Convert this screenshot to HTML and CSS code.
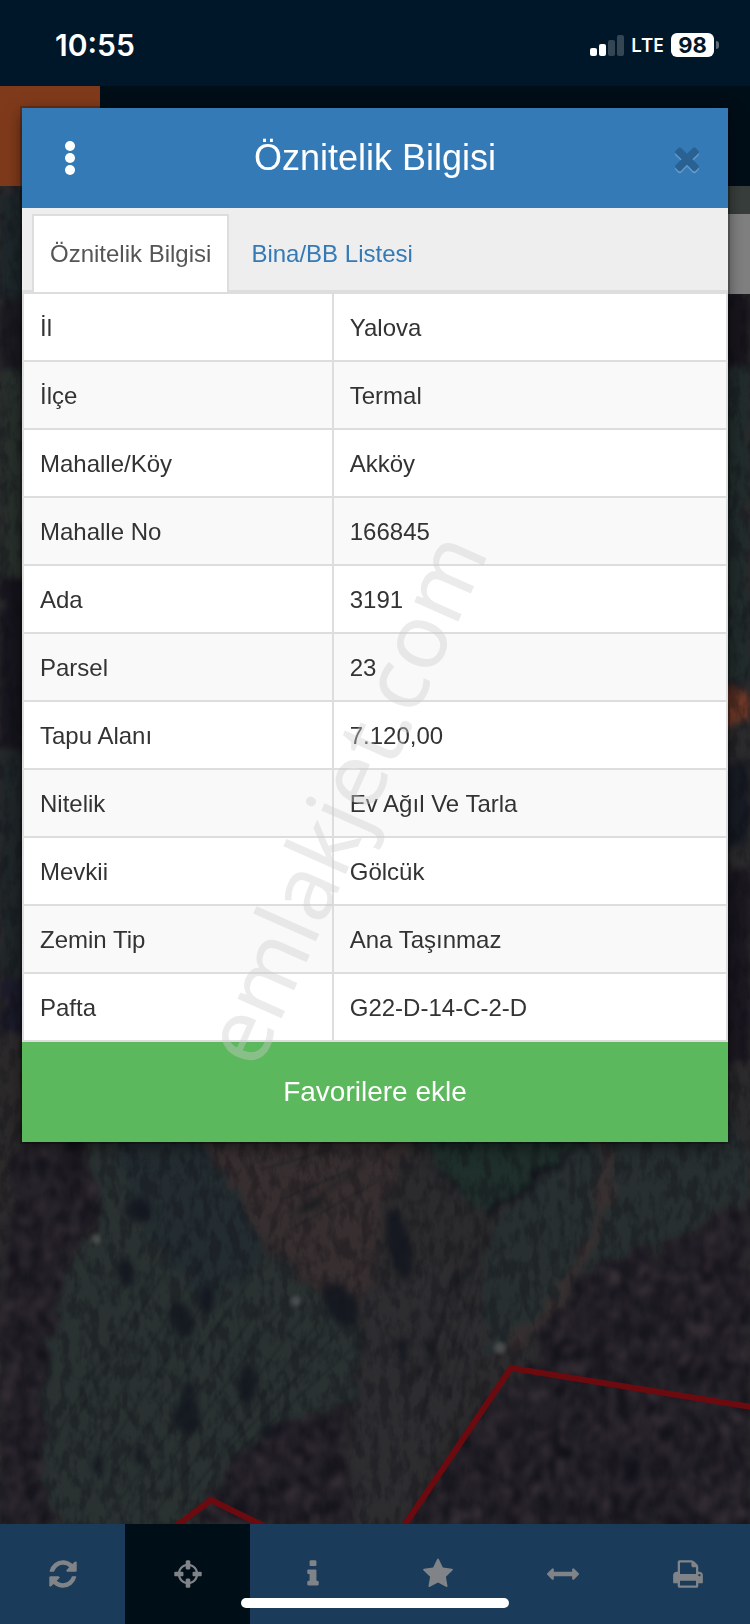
FILE: index.html
```
<!DOCTYPE html>
<html lang="tr">
<head>
   <meta charset="utf-8">
   <meta name="viewport" content="width=device-width, initial-scale=1">
   <title>Öznitelik Bilgisi</title>
   <link rel="stylesheet" href="styles.css">
</head>
<body>
   <div class="statusbar">
      <div class="time">10:55</div>
      <div class="status-right">
         <svg class="signal" viewBox="0 0 34 22" aria-hidden="true">
            <rect x="0" y="14" width="7" height="8" rx="2"/>
            <rect x="9" y="10" width="7" height="12" rx="2"/>
            <rect class="off" x="18" y="6" width="7" height="16" rx="2"/>
            <rect class="off" x="27" y="1" width="7" height="21" rx="2"/>
         </svg>
         <span class="network">LTE</span>
         <span class="battery">98</span>
      </div>
   </div>
   <div class="navbar"><div class="brand"></div></div>

   <div class="map">
      <svg viewBox="0 186 750 1338" preserveAspectRatio="xMidYMid slice" aria-hidden="true">
         <defs>
            <filter id="rough" x="0" y="0" width="100%" height="100%" color-interpolation-filters="sRGB">
               <feTurbulence type="fractalNoise" baseFrequency="0.04" numOctaves="3" seed="4" result="n"/>
               <feDisplacementMap in="SourceGraphic" in2="n" scale="30" xChannelSelector="R" yChannelSelector="G" result="d"/>
               <feGaussianBlur in="d" stdDeviation="3"/>
            </filter>
            <filter id="grain" x="0" y="0" width="100%" height="100%" color-interpolation-filters="sRGB">
               <feTurbulence type="fractalNoise" baseFrequency="0.1 0.05" numOctaves="4" seed="9"/>
               <feColorMatrix values="0 0 0 0 0.05  0 0 0 0 0.05  0 0 0 0 0.08  0 0 0 -4 2.3"/>
               <feComposite in2="SourceGraphic" operator="in"/>
            </filter>
            <filter id="speckle" x="0" y="0" width="100%" height="100%" color-interpolation-filters="sRGB">
               <feTurbulence type="fractalNoise" baseFrequency="0.16 0.08" numOctaves="3" seed="21"/>
               <feColorMatrix values="0 0 0 0 0.3  0 0 0 0 0.25  0 0 0 0 0.28  0 4 0 0 -1.9"/>
               <feComposite in2="SourceGraphic" operator="in"/>
               <feGaussianBlur stdDeviation="1"/>
            </filter>
            <path id="woods" d="M750 1200L680 1240 590 1270 545 1325 535 1368 490 1400 430 1480 405 1530H750zM20 1130H75L100 1200 75 1250 50 1330 38 1480 50 1524H0V1320zM190 1524L225 1475 265 1430 340 1400 352 1524z"/>
         </defs>

         <rect y="186" width="750" height="1338" fill="#2b2a2c"/>
         <g filter="url(#rough)">
            <!-- strips beside the dialog -->
            <path fill="#1e272b" d="M0 186H30V330H0z"/>
            <path fill="#1b1a20" d="M0 300H30V370H0z"/>
            <path fill="#28302c" d="M0 370H30V580H0z"/>
            <path fill="#17151d" d="M0 580H30V750H0z"/>
            <path fill="#202729" d="M0 750H30V980H0z"/>
            <path fill="#1b1b2b" d="M0 980H30V1030H0z"/>
            <path fill="#2c2a2a" d="M0 1030H30V1200H0z"/>
            <path fill="#18151c" d="M720 290H750V370H720z"/>
            <path fill="#222c2c" d="M720 370H750V680H720z"/>
            <path fill="#6d3928" d="M715 685L750 695V715L715 735z"/>
            <path fill="#171b23" d="M720 760H750V850H720z"/>
            <path fill="#1b1820" d="M720 870H750V1060H720z"/>
            <!-- fields -->
            <path fill="#293131" d="M90 1120H215L225 1200 265 1260 355 1320 358 1400 300 1410 265 1430 215 1490 180 1530H60L38 1480 40 1380 60 1290 95 1230z"/>
            <path fill="#232c30" d="M110 1120H205L260 1235 245 1285 190 1290 130 1200z"/>
            <path fill="#362e2f" d="M195 1120H405L395 1190 365 1300 310 1290 255 1225z"/>
            <path fill="#1f2f2b" d="M412 1120H595L490 1215 455 1190z"/>
            <path fill="#272f30" d="M590 1120H740L750 1190 680 1235 585 1270 520 1345 480 1350 490 1230z"/>
            <path fill="#2d2c2f" d="M365 1290L480 1250 485 1350 420 1480 395 1524H350z"/>
            <use href="#woods" fill="#201e25"/>
            <!-- tracks -->
            <path fill="none" stroke="#372f30" stroke-width="12" d="M604 1142Q612 1210 574 1270T508 1350"/>
            <path fill="none" stroke="#11131a" stroke-width="5" d="M585 1138L490 1212"/>
            <path fill="none" stroke="#171a1d" stroke-width="3" d="M365 1165L285 1220M425 1155L460 1195M490 1240L445 1290M470 1260L415 1380M358 1330L350 1440"/>
         </g>
         <g class="furrows">
            <path d="M75 1420L190 1230M85 1450L210 1250M95 1470L225 1270M110 1480L250 1280M120 1500L265 1300M135 1510L280 1310M150 1520L300 1320M60 1430L170 1240M175 1515L320 1320M210 1470L340 1330M230 1460L350 1350"/>
            <path d="M425 1380L455 1270M432 1390L465 1275M440 1390L475 1270M448 1400L482 1270M415 1440L440 1350M260 1170L330 1150M280 1200L350 1170M290 1230L380 1180"/>
         </g>
         <rect y="186" width="750" height="1338" filter="url(#grain)" opacity=".3"/>
         <g filter="url(#rough)">
            <use href="#woods" filter="url(#grain)" opacity=".6"/>
            <use href="#woods" filter="url(#speckle)" opacity=".7"/>
         </g>
         <g class="trees">
            <ellipse cx="126" cy="1272" rx="8" ry="14" transform="rotate(-15 126 1272)"/>
            <ellipse cx="182" cy="1320" rx="11" ry="18" transform="rotate(-15 182 1320)"/>
            <ellipse cx="206" cy="1300" rx="9" ry="13"/>
            <ellipse cx="187" cy="1417" rx="12" ry="17"/>
            <ellipse cx="189" cy="1392" rx="7" ry="10"/>
            <ellipse cx="138" cy="1210" rx="13" ry="12"/>
            <ellipse cx="399" cy="1245" rx="11" ry="36" transform="rotate(-12 399 1245)"/>
            <ellipse cx="403" cy="1350" rx="5" ry="14"/>
            <ellipse cx="248" cy="1383" rx="9" ry="20"/>
            <ellipse cx="98" cy="1465" rx="5" ry="10"/>
            <ellipse cx="140" cy="1457" rx="5" ry="8"/>
            <ellipse cx="268" cy="1432" rx="6" ry="9"/>
            <ellipse cx="340" cy="1305" rx="14" ry="24" transform="rotate(-30 340 1305)"/>
         </g>
         <g class="stones">
            <circle cx="96" cy="1239" r="5"/>
            <circle cx="500" cy="1348" r="6"/>
            <circle cx="296" cy="1301" r="5"/>
         </g>
         <rect x="720" y="186" width="30" height="28" fill="#383e3b"/>
         <rect x="720" y="214" width="30" height="80" fill="#808080"/>
         <path class="parcel" d="M404 1526L511 1368 752 1407M176 1526L211 1500 264 1526"/>
      </svg>
   </div>

   <div class="toolbar">
      <button type="button" aria-label="Yenile"><svg viewBox="0 0 1792 1792"><path d="M1639 1056q0 5-1 7-64 268-268 434.5t-478 166.5q-146 0-282.5-55t-243.5-157l-129 129q-19 19-45 19t-45-19-19-45v-448q0-26 19-45t45-19h448q26 0 45 19t19 45-19 45l-137 137q71 66 161 102t187 36q134 0 250-65t186-179q11-17 53-117 8-23 30-23h192q13 0 22.5 9.5t9.5 22.5zm25-800v448q0 26-19 45t-45 19h-448q-26 0-45-19t-19-45 19-45l138-138q-148-137-349-137-134 0-250 65t-186 179q-11 17-53 117-8 23-30 23h-199q-13 0-22.5-9.5t-9.5-22.5v-7q65-268 270-434.5t480-166.5q146 0 284 55.5t245 156.5l130-129q19-19 45-19t45 19 19 45z"/></svg></button>
      <button type="button" class="active" aria-label="Konum"><svg viewBox="0 0 1792 1792"><path d="M1325 1024h-109q-26 0-45-19t-19-45v-128q0-26 19-45t45-19h109q-32-108-112.5-188.5t-188.5-112.5v109q0 26-19 45t-45 19h-128q-26 0-45-19t-19-45v-109q-108 32-188.5 112.5t-112.5 188.5h109q26 0 45 19t19 45v128q0 26-19 45t-45 19h-109q32 108 112.5 188.5t188.5 112.5v-109q0-26 19-45t45-19h128q26 0 45 19t19 45v109q108-32 188.5-112.5t112.5-188.5zm339-192v128q0 26-19 45t-45 19h-143q-37 161-154.5 278.5t-278.5 154.5v143q0 26-19 45t-45 19h-128q-26 0-45-19t-19-45v-143q-161-37-278.5-154.5t-154.5-278.5h-143q-26 0-45-19t-19-45v-128q0-26 19-45t45-19h143q37-161 154.5-278.5t278.5-154.5v-143q0-26 19-45t45-19h128q26 0 45 19t19 45v143q161 37 278.5 154.5t154.5 278.5h143q26 0 45 19t19 45z"/></svg></button>
      <button type="button" aria-label="Bilgi"><svg viewBox="0 0 1792 1792"><path d="M1216 1344v128q0 26-19 45t-45 19h-512q-26 0-45-19t-19-45v-128q0-26 19-45t45-19h64v-384h-64q-26 0-45-19t-19-45v-128q0-26 19-45t45-19h384q26 0 45 19t19 45v576h64q26 0 45 19t19 45zm-128-1152v192q0 26-19 45t-45 19h-256q-26 0-45-19t-19-45v-192q0-26 19-45t45-19h256q26 0 45 19t19 45z"/></svg></button>
      <button type="button" aria-label="Favoriler"><svg viewBox="0 0 1792 1792"><path d="M1728 647q0 22-26 48l-363 354 86 500q1 7 1 20 0 21-10.5 35.5t-30.5 14.5q-19 0-40-12l-449-236-449 236q-22 12-40 12-21 0-31.5-14.5t-10.5-35.5q0-6 2-20l86-500-364-354q-25-27-25-48 0-37 56-46l502-73 225-455q19-41 49-41t49 41l225 455 502 73q56 9 56 46z"/></svg></button>
      <button type="button" aria-label="Ölçüm"><svg viewBox="0 0 1792 1792"><path d="M1792 896q0 26-19 45l-256 256q-19 19-45 19t-45-19-19-45v-128h-1024v128q0 26-19 45t-45 19-45-19l-256-256q-19-19-19-45t19-45l256-256q19-19 45-19t45 19 19 45v128h1024v-128q0-26 19-45t45-19 45 19l256 256q19 19 19 45z"/></svg></button>
      <button type="button" aria-label="Yazdır"><svg viewBox="0 0 1792 1792"><path d="M448 1536h896v-256h-896v256zm0-640h896v-384h-160q-40 0-68-28t-28-68v-160h-640v640zm1152 64q0-26-19-45t-45-19-45 19-19 45 19 45 45 19 45-19 19-45zm128 0v416q0 13-9.5 22.5t-22.5 9.5h-224v160q0 40-28 68t-68 28h-960q-40 0-68-28t-28-68v-160h-224q-13 0-22.5-9.5t-9.5-22.5v-416q0-79 56.5-135.5t135.5-56.5h64v-544q0-40 28-68t68-28h672q40 0 88 20t76 48l152 152q28 28 48 76t20 88v256h64q79 0 135.5 56.5t56.5 135.5z"/></svg></button>
   </div>

   <div class="modal" role="dialog" aria-labelledby="modal-title">
      <div class="modal-header">
         <button type="button" class="icon-btn" aria-label="Menü">
            <svg viewBox="0 0 36 36"><circle cx="18" cy="6" r="5"/><circle cx="18" cy="18" r="5"/><circle cx="18" cy="30" r="5"/></svg>
         </button>
         <h1 id="modal-title">Öznitelik Bilgisi</h1>
         <button type="button" class="icon-btn close" aria-label="Kapat">
            <svg viewBox="0 0 1792 1792"><path d="M1490 1322q0 40-28 68l-136 136q-28 28-68 28t-68-28l-294-294-294 294q-28 28-68 28t-68-28l-136-136q-28-28-28-68t28-68l294-294-294-294q-28-28-28-68t28-68l136-136q28-28 68-28t68 28l294 294 294-294q28-28 68-28t68 28l136 136q28 28 28 68t-28 68l-294 294 294 294q28 28 28 68z"/></svg>
         </button>
      </div>
      <div class="tabs">
         <a href="#oznitelik" class="active">Öznitelik Bilgisi</a>
         <a href="#bina">Bina/BB Listesi</a>
      </div>
      <table id="oznitelik">
         <tr><th scope="row">İl</th><td>Yalova</td></tr>
         <tr><th scope="row">İlçe</th><td>Termal</td></tr>
         <tr><th scope="row">Mahalle/Köy</th><td>Akköy</td></tr>
         <tr><th scope="row">Mahalle No</th><td>166845</td></tr>
         <tr><th scope="row">Ada</th><td>3191</td></tr>
         <tr><th scope="row">Parsel</th><td>23</td></tr>
         <tr><th scope="row">Tapu Alanı</th><td>7.120,00</td></tr>
         <tr><th scope="row">Nitelik</th><td>Ev Ağıl Ve Tarla</td></tr>
         <tr><th scope="row">Mevkii</th><td>Gölcük</td></tr>
         <tr><th scope="row">Zemin Tip</th><td>Ana Taşınmaz</td></tr>
         <tr><th scope="row">Pafta</th><td>G22-D-14-C-2-D</td></tr>
      </table>
      <button type="button" class="favorite">Favorilere ekle</button>
   </div>

   <div class="watermark"><span>emlakjet.com</span></div>
   <div class="home-indicator"></div>
</body>
</html>
```
FILE: styles.css
```
* {
   box-sizing:border-box;
}
body {
   margin:0;
   min-height:100vh;
   display:flex;
   flex-direction:column;
   position:relative;
   overflow-x:hidden;
   background:#001629;
   color:#333;
   font-family:"Helvetica Neue",Helvetica,"Liberation Sans",Arial,sans-serif;
   font-size:24px;
   line-height:34px;
}
button {
   margin:0;
   padding:0;
   border:0;
   background:none;
   font-family:inherit;
   cursor:pointer;
}

/* status bar */
.statusbar {
   height:86px;
   padding:4px 31px 0 55px;
   display:flex;
   align-items:center;
   justify-content:space-between;
   color:#fff;
   font-family:Inter,sans-serif;
}
.time {
   font-size:30px;
   font-weight:600;
}
.status-right {
   display:flex;
   align-items:center;
   gap:7px;
}
.signal {
   width:34px;
   height:22px;
   fill:#fff;
}
.signal .off {
   fill:#344653;
}
.network {
   font-family:"Open Sans",sans-serif;
   font-size:20px;
   font-weight:600;
}
.battery {
   position:relative;
   width:43px;
   height:24px;
   margin-right:5px;
   border-radius:6px;
   background:#fff;
   color:#001629;
   font-size:22px;
   font-weight:700;
   line-height:24px;
   text-align:center;
}
.battery:after {
   content:"";
   position:absolute;
   right:-5px;
   top:8px;
   width:3px;
   height:8px;
   border-radius:0 3px 3px 0;
   background:#5d6b76;
}

.navbar {
   height:100px;
   background:#000e18;
}
.brand {
   width:100px;
   height:100px;
   background:#7f3a1b;
}

/* map */
.map {
   position:relative;
   flex:1;
   min-height:1000px;
   overflow:hidden;
}
.map svg {
   position:absolute;
   width:100%;
   height:100%;
}
.furrows {
   fill:none;
   stroke:#1a2122;
   stroke-width:2;
   opacity:.5;
   filter:blur(1px);
}
.trees {
   fill:#12161f;
   opacity:.8;
   filter:blur(3px);
}
.stones {
   fill:#5b5c5c;
   opacity:.7;
   filter:blur(2px);
}
.parcel {
   fill:none;
   stroke:#6b0b10;
   stroke-width:6;
}

/* bottom toolbar */
.toolbar {
   display:flex;
   height:100px;
   background:#1a3c5a;
}
.toolbar button {
   flex:1;
   display:flex;
   align-items:center;
   justify-content:center;
}
.toolbar .active {
   background:#000e18;
}
.toolbar svg {
   width:32px;
   height:32px;
   fill:#808488;
}

/* dialog */
.modal {
   position:absolute;
   top:108px;
   left:22px;
   right:22px;
   background:#fff;
   box-shadow:0 0 0 2px rgba(0,0,0,.2), 0 5px 15px rgba(0,0,0,.5);
}
.modal-header {
   display:flex;
   align-items:center;
   justify-content:space-between;
   height:100px;
   background:#337ab7;
   color:#fff;
}
.modal-header h1 {
   margin:0;
   font-size:36px;
   font-weight:normal;
   line-height:40px;
}
.icon-btn {
   display:flex;
   align-items:center;
   justify-content:center;
   width:96px;
   height:100px;
}
.icon-btn svg {
   width:36px;
   height:36px;
   fill:#fff;
}
.close {
   padding-left:14px;
}
.close svg {
   fill:#296292;
   filter:drop-shadow(0 2px 0 rgba(255,255,255,.25));
}
.tabs {
   display:flex;
   padding:6px 10px 0;
   background:#eee;
   border-bottom:2px solid #ddd;
}
.tabs a {
   margin-bottom:-2px;
   padding:20px 16px;
   border:2px solid transparent;
   border-bottom:0;
   color:#337ab7;
   line-height:36px;
   text-decoration:none;
}
.tabs a + a {
   margin-left:4px;
}
.tabs .active {
   background:#fff;
   border-color:#ddd;
   color:#555;
}
table {
   width:100%;
   border-collapse:collapse;
}
tr:nth-child(even) {
   background:#f9f9f9;
}
th, td {
   padding:17px 16px 15px;
   border:2px solid #ddd;
   font-weight:normal;
   text-align:left;
}
th {
   width:44%;
}
.favorite {
   display:block;
   width:100%;
   height:100px;
   background:#5cb85c;
   color:#fff;
   font-size:28px;
}

.watermark {
   position:absolute;
   top:0;
   right:0;
   bottom:0;
   left:0;
   display:flex;
   align-items:center;
   justify-content:center;
   overflow:hidden;
   pointer-events:none;
   color:rgba(205,205,205,.4);
   font-family:"Noto Sans",sans-serif;
   font-size:90px;
   line-height:90px;
}
.watermark span {
   padding-bottom:72px;
   transform:rotate(-66deg);
}
.home-indicator {
   position:absolute;
   bottom:16px;
   left:50%;
   width:268px;
   height:10px;
   margin-left:-134px;
   border-radius:5px;
   background:#fff;
}
```
